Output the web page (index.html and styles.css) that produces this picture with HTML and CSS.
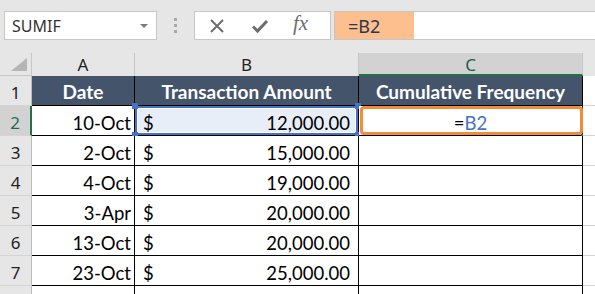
FILE: index.html
```html
<!DOCTYPE html>
<html lang="en">
<head>
    <meta charset="UTF-8">
    <title>SUMIF - Cumulative Frequency</title>
    <link rel="stylesheet" href="styles.css">
</head>
<body>
    <div class="formula-bar">
        <div class="name-box">
            <span>SUMIF</span>
            <span class="caret"></span>
        </div>
        <div class="grip"><i></i><i></i><i></i></div>
        <div class="fx-box">
            <svg width="16" height="16" viewBox="0 0 16 16" class="icon">
                <path d="M2 2 L14 14 M14 2 L2 14" stroke="#6d6d6d" stroke-width="2" fill="none"/>
            </svg>
            <svg width="18" height="16" viewBox="0 0 18 16" class="icon">
                <path d="M2 8.5 L6.5 13 L16 3" stroke="#6d6d6d" stroke-width="3" fill="none"/>
            </svg>
            <span class="fx">fx</span>
        </div>
        <div class="formula-input">
            <span class="formula-text">=B2</span>
        </div>
    </div>

    <div class="sheet">
        <!-- column headers -->
        <div class="corner"><span class="corner-tri"></span></div>
        <div class="col-head">A</div>
        <div class="col-head">B</div>
        <div class="col-head selected">C</div>
        <div class="col-head last"></div>

        <!-- row 1 -->
        <div class="row-head">1</div>
        <div class="cell th">Date</div>
        <div class="cell th">Transaction Amount</div>
        <div class="cell th">Cumulative Frequency</div>
        <div class="cell empty"></div>

        <!-- row 2 -->
        <div class="row-head selected">2</div>
        <div class="cell date">10-Oct</div>
        <div class="cell money ref"><span>$</span><span>12,000.00</span>
            <i class="handle tl"></i><i class="handle bl"></i><i class="handle tr"></i><i class="handle br"></i>
        </div>
        <div class="cell active"><span class="eq">=</span><span class="ref-text">B2</span><span class="edit-ring"></span><i class="fill-handle"></i></div>
        <div class="cell empty"></div>

        <div class="row-head">3</div>
        <div class="cell date">2-Oct</div>
        <div class="cell money"><span>$</span><span>15,000.00</span></div>
        <div class="cell"></div>
        <div class="cell empty"></div>

        <div class="row-head">4</div>
        <div class="cell date">4-Oct</div>
        <div class="cell money"><span>$</span><span>19,000.00</span></div>
        <div class="cell"></div>
        <div class="cell empty"></div>

        <div class="row-head">5</div>
        <div class="cell date">3-Apr</div>
        <div class="cell money"><span>$</span><span>20,000.00</span></div>
        <div class="cell"></div>
        <div class="cell empty"></div>

        <div class="row-head">6</div>
        <div class="cell date">13-Oct</div>
        <div class="cell money"><span>$</span><span>20,000.00</span></div>
        <div class="cell"></div>
        <div class="cell empty"></div>

        <div class="row-head">7</div>
        <div class="cell date">23-Oct</div>
        <div class="cell money"><span>$</span><span>25,000.00</span></div>
        <div class="cell"></div>
        <div class="cell empty"></div>

        <!-- row 8, only its top edge shows -->
        <div class="row-head"></div>
        <div class="cell"></div>
        <div class="cell"></div>
        <div class="cell"></div>
        <div class="cell empty"></div>
    </div>
</body>
</html>
```

FILE: styles.css
```css
* {
    box-sizing: border-box;
}

body {
    margin: 0;
    background-color: #e6e6e6;
    font-family: Lato, "Liberation Sans", sans-serif;
    color: #000;
    overflow: hidden;
}

/* formula bar */
.formula-bar {
    display: flex;
    align-items: center;
    height: 53px;
    padding: 0 0 2px 4px;
}

.name-box {
    width: 153px;
    height: 29px;
    background-color: #fff;
    border: 1px solid #c6c6c6;
    display: flex;
    align-items: center;
    justify-content: space-between;
    padding: 0 8px 0 7px;
    font-family: "Noto Sans", "Open Sans", sans-serif;
    font-size: 16px;
    color: #333;
}

.caret {
    width: 0;
    height: 0;
    border-left: 4px solid transparent;
    border-right: 4px solid transparent;
    border-top: 4px solid #7a7a7a;
}

.grip {
    width: 37px;
    display: flex;
    flex-direction: column;
    align-items: center;
    gap: 3px;
}

.grip i {
    width: 3px;
    height: 3px;
    background-color: #a8a8a8;
}

.fx-box {
    width: 137px;
    height: 29px;
    background-color: #fff;
    border: 1px solid #c6c6c6;
    display: flex;
    align-items: center;
    padding-left: 14px;
    gap: 26px;
}

.fx {
    font-family: "Liberation Serif", serif;
    font-style: italic;
    font-size: 21px;
    color: #6d6d6d;
    margin-left: -2px;
    margin-top: -4px;
}

.formula-input {
    flex: 1;
    height: 29px;
    margin-left: 3px;
    background-color: #fff;
    border: 1px solid #c6c6c6;
    border-right: none;
}

.formula-text {
    display: flex;
    align-items: center;
    width: 79px;
    height: 27px;
    padding-left: 13px;
    background-color: #fdbf8d;
    font-family: "Noto Sans", "Open Sans", sans-serif;
    font-size: 18px;
    color: #2c3850;
}

/* grid */
.sheet {
    display: grid;
    grid-template-columns: 32px 103px 224px 224px 1fr;
    grid-template-rows: 23px repeat(8, 30px);
}

.corner {
    border-right: 1px solid #c6c6c6;
    border-bottom: 1px solid #c6c6c6;
    position: relative;
}

.corner-tri {
    position: absolute;
    right: 4px;
    bottom: 4px;
    width: 0;
    height: 0;
    border-left: 16px solid transparent;
    border-bottom: 13px solid #b5b5b5;
}

.col-head {
    display: flex;
    align-items: center;
    justify-content: center;
    border-right: 1px solid #c6c6c6;
    font-family: "Noto Sans", "Open Sans", sans-serif;
    font-size: 17px;
    color: #222;
}

.col-head.selected {
    background-color: #d2d2d2;
    border-bottom: 2px solid #217346;
    color: #1e5e46;
    padding-top: 2px;
}

.col-head.last {
    border-right: none;
}

.row-head {
    display: flex;
    align-items: center;
    justify-content: center;
    padding-top: 4px;
    border-right: 1px solid #bcbcbc;
    border-bottom: 1px solid #d4d4d4;
    font-family: "Noto Sans", "Open Sans", sans-serif;
    font-size: 17px;
    color: #222;
}

.row-head.selected {
    background-color: #d2d2d2;
    border-right: 2px solid #217346;
    color: #1e6e4e;
}

.cell {
    background-color: #fff;
    border-right: 1px solid #000;
    border-bottom: 1px solid #000;
    display: flex;
    align-items: center;
    padding-top: 4px;
    font-size: 18.5px;
    position: relative;
}

.cell.th {
    background-color: #44546a;
    color: #fff;
    font-weight: bold;
    font-size: 19px;
    justify-content: center;
    padding-top: 2px;
}

.cell.empty {
    border-right: none;
    border-bottom: 1px solid #d4d4d4;
}

.cell.date {
    justify-content: flex-end;
    padding-right: 3px;
}

.cell.money {
    justify-content: space-between;
    padding: 4px 8px 0 8px;
}

.cell.ref {
    background-color: #e8eef8;
    box-shadow: inset 0 0 0 2px #4472c4, inset 0 0 0 3px #fff;
}

.handle {
    position: absolute;
    width: 6px;
    height: 6px;
    background-color: #4472c4;
}

.handle.tl { left: -3px; top: -3px; }
.handle.bl { left: -3px; bottom: -3px; }
.handle.tr { right: -3px; top: -3px; }
.handle.br { right: -3px; bottom: -3px; }

.cell.active {
    justify-content: center;
    border-right: 1px solid #000;
}

.eq {
    color: #000;
}

.ref-text {
    color: #4472c4;
}

.edit-ring {
    position: absolute;
    left: 1px;
    top: 0;
    right: -1px;
    bottom: 0;
    border: 3px solid #f28c3b;
    border-radius: 4px;
}

.fill-handle {
    position: absolute;
    right: -3px;
    bottom: -3px;
    width: 4px;
    height: 4px;
    background-color: #217346;
}
```
